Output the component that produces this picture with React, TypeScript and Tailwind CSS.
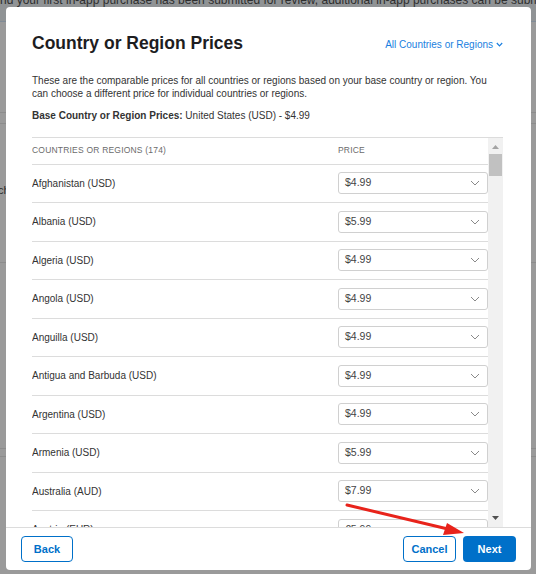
import React from "react";

const rows: [string, string][] = [
  ["Afghanistan (USD)", "$4.99"],
  ["Albania (USD)", "$5.99"],
  ["Algeria (USD)", "$4.99"],
  ["Angola (USD)", "$4.99"],
  ["Anguilla (USD)", "$4.99"],
  ["Antigua and Barbuda (USD)", "$4.99"],
  ["Argentina (USD)", "$4.99"],
  ["Armenia (USD)", "$5.99"],
  ["Australia (AUD)", "$7.99"],
  ["Austria (EUR)", "€5.99"],
];

function Chevron() {
  return (
    <svg width="10" height="6" viewBox="0 0 10 6" className="shrink-0">
      <path d="M1 1 L5 5 L9 1" fill="none" stroke="#8a8a8a" strokeWidth="1" />
    </svg>
  );
}

export default function App() {
  return (
    <div
      className="relative w-[536px] h-[574px] overflow-hidden bg-[#9a9a9a]"
      style={{ fontFamily: '"Liberation Sans", Arial, sans-serif' }}
    >
      {/* dimmed background page */}
      <div className="flex flex-col">
        <div className="h-[21px] bg-[#909395] overflow-hidden">
          <div className="mt-[-9px] whitespace-nowrap text-[12px] text-[#2e2e2e] pl-0">
            nd your first in-app purchase has been submitted for review, additional in-app purchases can be submitted from the in
          </div>
        </div>
        <div className="h-[1px] bg-[#808b96]" />
        <div className="h-[90px]" />
        <div className="h-[1px] bg-[#8c8c8c]" />
        <div className="h-[10px]" />
        <div className="h-[1px] bg-[#8c8c8c]" />
        <div className="h-[72px] flex items-end">
          <span className="text-[11px] leading-none text-[#2a2a2a] ml-[-2px]">ch</span>
        </div>
        <div className="h-[66px]" />
        <div className="h-[1px] bg-[#8c8c8c]" />
        <div className="h-[185px]" />
        <div className="h-[1px] bg-[#8c8c8c]" />
        <div className="h-[7px]" />
        <div className="h-[1px] bg-[#8c8c8c]" />
      </div>

      {/* modal */}
      <div className="absolute left-[6px] top-[7px] w-[525px] h-[563px] bg-white rounded-[4px] flex flex-col overflow-hidden">
        <div className="flex-1 min-h-0 flex flex-col pl-[26px] pr-[28px] pt-[26px]">
          <div className="flex items-center justify-between h-[22px]">
            <h1 className="text-[17.5px] font-bold text-[#1d1d1f] leading-none">
              Country or Region Prices
            </h1>
            <div className="flex items-center gap-[3px] text-[10px] text-[#1a7fe0]">
              <span>All Countries or Regions</span>
              <svg width="7" height="5" viewBox="0 0 7 5">
                <path d="M0.8 1 L3.5 3.8 L6.2 1" fill="none" stroke="#1a7fe0" strokeWidth="1.2" />
              </svg>
            </div>
          </div>
          <p className="mt-[19px] text-[10px] leading-[13px] text-[#333]">
            These are the comparable prices for all countries or regions based on your base country or region. You can choose a different price for individual countries or regions.
          </p>
          <p className="mt-[9px] text-[10px] leading-[13px] text-[#333]">
            <span className="font-bold">Base Country or Region Prices:</span> United States (USD) - $4.99
          </p>
          <div className="mt-[15px] flex-1 min-h-0 flex border-t border-[#dcdcdc]">
            <div className="flex-1 min-h-0 overflow-hidden">
              <div className="h-[26.5px] flex items-center border-b border-[#dcdcdc] text-[8.5px] text-[#6b6b6b] tracking-[0.2px]">
                <span className="w-[306px]">COUNTRIES OR REGIONS (174)</span>
                <span>PRICE</span>
              </div>
              {rows.map(([name, price]) => (
                <div
                  key={name}
                  className="h-[38.5px] flex items-center border-b border-[#dcdcdc]"
                >
                  <span className="w-[306px] text-[10px] text-[#333]">{name}</span>
                  <div className="w-[150px] h-[22px] border border-[#d0d0d0] rounded-[3px] flex items-center justify-between pl-[6px] pr-[7px]">
                    <span className="text-[10.5px] text-[#444]">{price}</span>
                    <Chevron />
                  </div>
                </div>
              ))}
            </div>
            <div className="w-[15px] bg-[#f1f1f1] flex flex-col items-center">
              <svg width="7" height="4" viewBox="0 0 7 4" className="mt-[7px]">
                <path d="M0 4 L3.5 0 L7 4 Z" fill="#a3a3a3" />
              </svg>
              <div className="mt-[5px] w-[13px] h-[22px] bg-[#c1c1c1]" />
              <div className="flex-1" />
              <svg width="7" height="4" viewBox="0 0 7 4" className="mb-[7px]">
                <path d="M0 0 L3.5 4 L7 0 Z" fill="#505050" />
              </svg>
            </div>
          </div>
        </div>
        <div className="h-[43px] shrink-0 border-t border-[#dcdcdc] flex items-center justify-between px-[15px]">
          <button className="w-[52px] h-[26px] border border-[#0070c9] rounded-[4px] text-[11px] font-bold text-[#0070c9]">
            Back
          </button>
          <div className="flex items-center gap-[7px]">
            <button className="w-[53px] h-[26px] border border-[#0070c9] rounded-[4px] text-[11px] font-bold text-[#0070c9]">
              Cancel
            </button>
            <button className="w-[53px] h-[26px] bg-[#0070c9] rounded-[4px] text-[11px] font-bold text-white">
              Next
            </button>
          </div>
        </div>
      </div>

      {/* red annotation arrow */}
      <svg className="absolute left-0 top-0 pointer-events-none" width="536" height="574">
        <line x1="347" y1="505" x2="450" y2="529.5" stroke="#e8231b" strokeWidth="3" strokeLinecap="round" />
        <path d="M464 533 L443 535 L447 523 Z" fill="#e8231b" />
      </svg>
    </div>
  );
}
